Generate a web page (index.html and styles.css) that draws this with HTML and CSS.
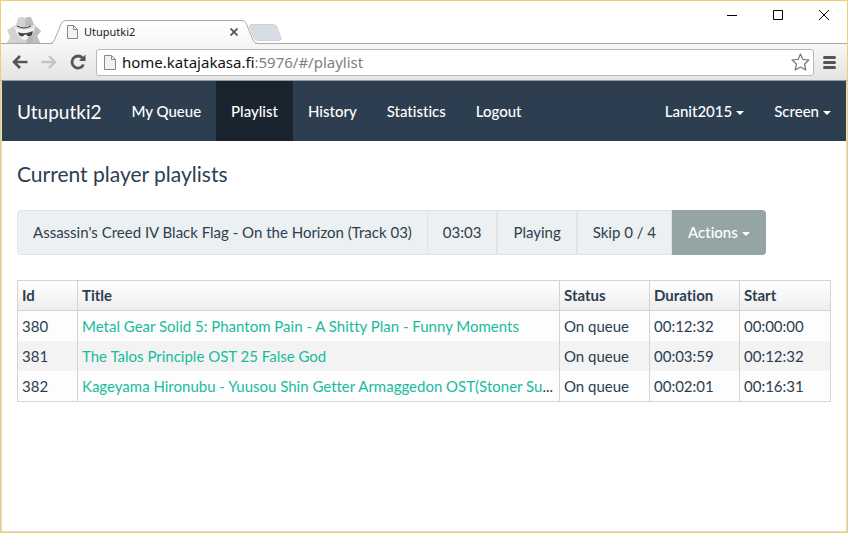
FILE: index.html
```html
<!DOCTYPE html>
<html lang="en">
<head>
<meta charset="utf-8">
<title>Utuputki2</title>
<link rel="stylesheet" href="styles.css">
</head>
<body>
<div class="window">
  <header class="titlebar">
    <svg class="incognito" width="36" height="27" viewBox="0 0 36 27" aria-hidden="true">
      <path fill="#d2d2d2" d="M1 27 4 21 1 14 8 10 10 9 12 2Q16 0 19 2Q23 0 25 1L28 9 33 13 35 15 31 20 34 26V27Z"/>
      <path fill="#bdbdbd" d="M20 2Q24 0 25 2L28 9 35 15 31 20 34 27H21L18 20Z"/>
      <path fill="#f4f4f4" d="M8 10Q18 15 29 9L28 15Q26 22 19 24Q12 22 10 15Z"/>
      <path fill="#dedede" d="M7 9Q18 14 30 8Q29 13 19 13.500Q9 14 7 9Z"/>
      <path fill="none" stroke="#3c3c3c" d="M11 10Q18 14 25 10"/>
      <path fill="#444" d="M12 16Q18 19 27 15L26 19Q23 22 20 18.500H19Q16 22 13 19Z"/>
      <path fill="#b4b4b4" d="M21 27 22 21 27 19 26 27Z"/>
    </svg>
    <div class="tab">
      <svg class="tab-shape" width="208" height="24" viewBox="0 0 208 24" aria-hidden="true">
        <defs><linearGradient id="tabfill" x2="0" y2="1"><stop stop-color="#fff"/><stop offset="1" stop-color="#f7f7f7"/></linearGradient></defs>
        <path fill="url(#tabfill)" stroke="#aaa" d="M0 23.500Q3 23.500 4.500 20L11 4Q12.500 .5 16 .5H192Q195 .5 196.500 4L203 20Q204.500 23.500 208 23.500"/>
        <path stroke="#f7f7f7" d="M3 23.500H205"/>
      </svg>
      <svg class="page" width="11" height="14" viewBox="0 0 11 14" aria-hidden="true"><path fill="#f2f2f2" stroke="#888" d="M.5 .5H6.500L10.500 4.500V13.500H.5ZM6.500 .5V4.500H10.500"/></svg>
      <span class="tab-title">Utuputki2</span>
      <button class="icon-button" aria-label="Close tab"><svg width="8" height="8" viewBox="0 0 8 8"><path stroke="#555" stroke-width="1.800" d="M.5 .5 7.500 7.500M7.500 .5 .5 7.500"/></svg></button>
    </div>
    <button class="icon-button new-tab" aria-label="New tab"><svg width="33" height="17" viewBox="0 0 33 17"><path fill="#d8dde5" stroke="#cfd3d9" d="M3 .5H24Q27 .5 28 3L32 14Q32.500 16.500 30 16.500H9Q6 16.500 5 14L.5 3Q0 .5 3 .5Z"/></svg></button>
    <div class="window-buttons">
      <button class="icon-button" aria-label="Minimize"><svg width="10" height="10" viewBox="0 0 10 10"><path stroke="#000" d="M0 5.500H10"/></svg></button>
      <button class="icon-button" aria-label="Maximize"><svg width="10" height="10" viewBox="0 0 10 10"><path fill="none" stroke="#000" d="M.5 .5H9.500V9.500H.5Z"/></svg></button>
      <button class="icon-button" aria-label="Close"><svg width="10" height="10" viewBox="0 0 10 10"><path stroke="#000" d="M0 0 10 10M10 0 0 10"/></svg></button>
    </div>
  </header>
  <div class="toolbar">
    <button class="icon-button" aria-label="Back"><svg width="16" height="14" viewBox="0 0 16 14"><path fill="none" stroke="#555" stroke-width="2.600" d="M15.500 7H2.500M8 1 2 7 8 13"/></svg></button>
    <button class="icon-button" aria-label="Forward"><svg width="16" height="14" viewBox="0 0 16 14"><path fill="none" stroke="#c4c4c4" stroke-width="2.400" d="M.5 7H13.500M8 1 14 7 8 13"/></svg></button>
    <button class="icon-button" aria-label="Reload"><svg width="16" height="16" viewBox="0 0 16 16"><path fill="none" stroke="#555" stroke-width="2.800" d="M12.500 4A6 6 0 1 0 13.500 10.500"/><path fill="#555" d="M15.500 .5V7H9Z"/></svg></button>
    <div class="address">
      <svg width="12" height="15" viewBox="0 0 12 15" aria-hidden="true"><path fill="#f2f2f2" stroke="#888" d="M.5 .5H7.500L11.500 4.500V14.500H.5ZM7.500 .5V4.500H11.500"/></svg>
      <span class="url">home.katajakasa.fi<span class="path">:5976/#/playlist</span></span>
      <button class="icon-button" aria-label="Bookmark"><svg width="19" height="18" viewBox="0 0 19 18"><path fill="#fff" stroke="#777" stroke-width="1.200" stroke-linejoin="round" d="M9.500 1 11.900 6.400 18 7 13.500 11 14.800 17 9.500 13.900 4.200 17 5.500 11 1 7 7.100 6.400Z"/></svg></button>
    </div>
    <button class="icon-button" aria-label="Menu"><svg width="13" height="13" viewBox="0 0 13 13"><path stroke="#555" stroke-width="3" stroke-linecap="round" d="M1.500 1.500H11.500M1.500 6.500H11.500M1.500 11.500H11.500"/></svg></button>
  </div>
  <div class="content">
    <nav class="navbar">
      <a class="brand" href="#/">Utuputki2</a>
      <a href="#/queue">My Queue</a>
      <a class="active" href="#/playlist">Playlist</a>
      <a href="#/history">History</a>
      <a href="#/statistics">Statistics</a>
      <a href="#/logout">Logout</a>
      <a class="menu first-menu" href="#/event">Lanit2015<span class="caret"></span></a>
      <a class="menu" href="#/screen">Screen<span class="caret"></span></a>
    </nav>
    <main>
      <h1>Current player playlists</h1>
      <div class="player">
        <span>Assassin's Creed IV Black Flag - On the Horizon (Track 03)</span>
        <span>03:03</span>
        <span>Playing</span>
        <span>Skip 0 / 4</span>
        <button class="menu">Actions<i class="caret"></i></button>
      </div>
      <table>
        <colgroup><col class="id"><col><col class="short"><col class="short"><col class="last"></colgroup>
        <thead><tr><th>Id</th><th>Title</th><th>Status</th><th>Duration</th><th>Start</th></tr></thead>
        <tbody>
          <tr><td>380</td><td><a href="#/380">Metal Gear Solid 5: Phantom Pain - A Shitty Plan - Funny Moments</a></td><td>On queue</td><td>00:12:32</td><td>00:00:00</td></tr>
          <tr><td>381</td><td><a href="#/381">The Talos Principle OST 25 False God</a></td><td>On queue</td><td>00:03:59</td><td>00:12:32</td></tr>
          <tr><td>382</td><td><a href="#/382">Kageyama Hironubu - Yuusou Shin Getter Armaggedon OST(Stoner Su</a>...</td><td>On queue</td><td>00:02:01</td><td>00:16:31</td></tr>
        </tbody>
      </table>
    </main>
  </div>
</div>
</body>
</html>
```
FILE: styles.css
```css
* { box-sizing: border-box; }

body {
  margin: 0;
  font-family: Lato, sans-serif;
  font-size: 15px;
  line-height: 21px;
  font-variant-ligatures: none;
  color: #2c3e50;
}

svg { display: block; }
a { text-decoration: none; }

.window {
  display: flex;
  flex-direction: column;
  min-height: 100vh;
  border: 1px solid #efd06f;
  background: #fff;
}

.icon-button {
  padding: 0;
  border: 0;
  background: none;
  flex: none;
}

/* Browser title bar */
.titlebar {
  display: flex;
  align-items: flex-end;
  height: 43px;
  padding-left: 5px;
  border-bottom: 1px solid #aaa;
}

.tab {
  position: relative;
  display: flex;
  align-items: center;
  width: 208px;
  height: 23px;
  margin-left: 8px;
  padding: 1px 20px 0 17px;
  font: 11px/16px "Noto Sans", sans-serif;
  color: #222;
}

.tab > * { position: relative; }

.tab .tab-shape {
  position: absolute;
  top: 0;
  left: 0;
}

.tab-title {
  flex: 1;
  margin-left: 6px;
}

.new-tab {
  align-self: flex-end;
  margin: 0 0 2px -9px;
}

.window-buttons {
  display: flex;
  align-self: flex-start;
  gap: 36px;
  margin-left: auto;
  padding: 9px 18px 0 0;
}

/* Address row */
.toolbar {
  display: flex;
  align-items: center;
  gap: 13px;
  height: 37px;
  padding: 0 11px;
  border-bottom: 1px solid #999;
  background: linear-gradient(#f7f7f7, #e4e4e4);
}

.address {
  display: flex;
  flex: 1;
  align-items: center;
  height: 27px;
  margin: 0 -4px 0 -3px;
  padding: 0 3px 0 7px;
  border: 1px solid #b8b8b8;
  border-radius: 3px;
  background: #fff;
}

.url {
  flex: 1;
  margin-left: 6px;
  font: 15px/20px "Noto Sans", sans-serif;
  color: #111;
}

.path { color: #808080; }

/* Page */
.content {
  flex: 1;
  border: 1px solid #ddd;
  border-top: 0;
}

.navbar {
  display: flex;
  height: 60px;
  margin: 0 -1px 0 0;
  border-right: 1px solid #ddd;
  background: #2c3e50;
}

.navbar a {
  padding: 20px 15px;
  font-weight: 500;
  color: #fff;
}

.navbar .brand {
  font-size: 19px;
  font-weight: 400;
}

.navbar .active { background: #1a242f; }
.navbar .first-menu { margin-left: auto; }

.menu { white-space: nowrap; }

.caret {
  display: inline-block;
  margin-left: 4px;
  vertical-align: middle;
  border: 4px solid transparent;
  border-top-color: currentColor;
  border-bottom: 0;
}

main { padding: 21px 15px; }

h1 {
  margin: 0 0 24px;
  font-size: 21px;
  font-weight: 400;
  line-height: 24px;
}

.player {
  display: flex;
  height: 45px;
  margin-bottom: 25px;
}

.player span {
  padding: 11px 15px;
  border: 1px solid #dce4ec;
  background: #ecf0f1;
}

.player span:first-child {
  border-right: 0;
  border-radius: 4px 0 0 4px;
}

.player .menu {
  padding: 0 16px;
  border: 0;
  border-radius: 0 4px 4px 0;
  font: inherit;
  font-weight: 500;
  color: #fff;
  background: #95a5a6;
}

table {
  width: 100%;
  table-layout: fixed;
  border: 1px solid #d4d4d4;
  border-spacing: 0;
}

.id { width: 60px; }
.short { width: 90px; }
.last { width: 90px; }

th, td {
  height: 30px;
  padding: 0 4px;
  border-right: 1px solid #d4d4d4;
  text-align: left;
  white-space: nowrap;
  overflow: hidden;
}

th:last-child, td:last-child { border-right: 0; }

th {
  border-bottom: 1px solid #d4d4d4;
  background: linear-gradient(#fff, #eee);
}

td { background: #fdfdfd; }
tr:nth-child(even) td { background: #f3f3f3; }
td a { color: #18bc9c; }
```
